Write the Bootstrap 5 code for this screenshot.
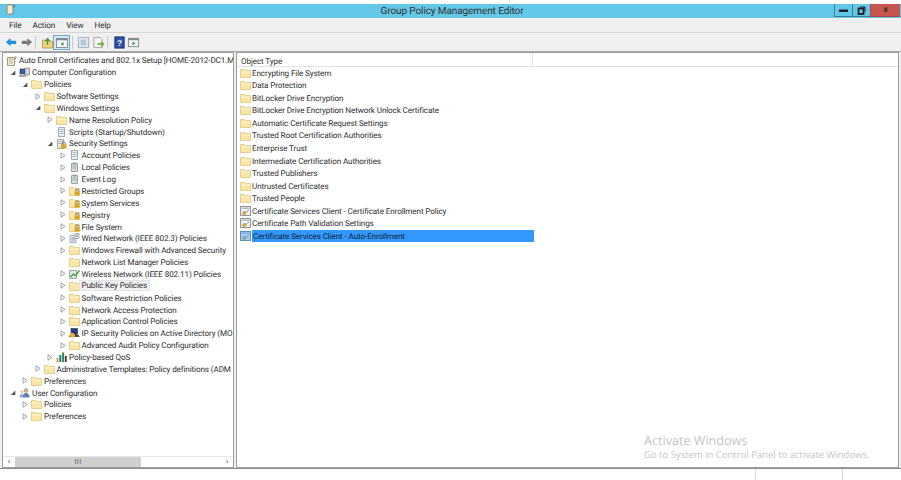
<!DOCTYPE html>
<html lang="en">
<head>
<meta charset="utf-8">
<title>Group Policy Management Editor</title>
<link href="https://cdn.jsdelivr.net/npm/bootstrap@5.3.0/dist/css/bootstrap.min.css" rel="stylesheet">
<style>
html,body{height:480px;overflow:hidden}
body{background:#fff;font-family:Roboto,"Noto Sans",sans-serif;font-size:8.1px;letter-spacing:-.11px;color:#2e2e2e;line-height:1;text-rendering:geometricPrecision}
.win{width:901px;height:480px;position:relative}
.topgap{height:4px}
.titlebar{height:14px;background:#63c7e8;font-size:10px;letter-spacing:-.1px;color:#333;position:relative}
.title-ico{width:9px;height:11px;margin-left:6px}
.title-text{left:0;right:0;top:0;bottom:0;padding-left:3px;padding-top:1px}
.capbtn{height:13px;width:18px;border:solid #3d7f99;border-width:0 0 1px 1px;position:relative;z-index:1}
.capbtn.closer{width:30px;background:#c7574e;border-color:#a8483f;margin-right:1px;font-weight:700;font-size:9px}
.menubar{height:15px;background:#f0f0f0;border-bottom:1px solid #d6d6d6;padding-left:9px;padding-top:3px;gap:11px;font-size:8.2px}
.toolbar{height:19px;background:#f0f0f0;border-bottom:1px solid #a9a9a9;padding-left:5px}
.tb{width:13px;height:13px;margin-right:2px;margin-top:3px}
.tb-up{width:11px;height:13px;margin-top:3px}
.tb-on{width:17px;height:15px;background:#d5e9f5;border:1px solid #6fa9cf;margin-top:2px}
.tb-sep{width:1px;height:13px;background:#c8c8c8;margin:3px 6px 0 0}
.tb-sep2{margin:3px 4px 0 2px}
.tb-sep3{margin:3px 5px 0 0}
.tb-help{margin-right:1px}
.panes{height:416px;background:#f0f0f0;padding:0 2px;gap:2px}
.pane-l{width:232px;background:#fff;border:1px solid #9c9c9c}
.pane-r{flex:1;background:#fff;border:1px solid #9c9c9c}
.tree{flex:1;overflow:hidden;padding-top:1.600px}
.trow{height:11.87px;white-space:nowrap;overflow:hidden}
.twist{width:6px;height:7px;flex:none;margin-right:3px}
.tico{width:11px;height:10px;flex:none;margin-right:2px}
.lv0{padding-left:3px}.lv1{padding-left:7px}.lv2{padding-left:19px}.lv3{padding-left:31.500px}.lv4{padding-left:44px}.lv5{padding-left:56.500px}
.hot{background:#f1f1f1;box-shadow:inset 0 0 0 1px #e4e4e4;padding:0 3px;margin-left:-3px;line-height:11px}
.hbar{height:11px;background:#fff;border-top:1px solid #e6e6e6}
.sbtn{width:12px;color:#555;font-size:9px}
.sthumb{width:126px;background:#d0d0d0;color:#555;font-size:7px;letter-spacing:.5px}
.shead{height:14px;border-bottom:1px solid #e3e3e3;padding-left:4px}
.shead-c{width:292px;border-right:1px solid #e3e3e3;height:100%;padding-top:3px}
.list{margin-top:-.4px}
.lrow{height:12.54px;white-space:nowrap;padding-left:3px}
.lrow .tico{margin-right:1px}
.sel{background:#3399ff;color:#123;width:282px;height:100%;padding-left:1px}
.lrow-sel .tico{background:#3399ff}
.lrow-sel .tico use{opacity:.6}
.statusbar{height:12px;background:#fff;border-top:1px solid #8f8f8f}
.st-a{width:756px;border-right:1px solid #d9d9d9}
.st-b{width:87px;border-right:1px solid #d9d9d9}
.wm{position:absolute;left:644px;top:433px;color:#c4c4c4;white-space:nowrap;font-family:"Open Sans",sans-serif;letter-spacing:0}
.wm1{font-size:12.600px;line-height:15px}
.wm2{font-size:9.500px;line-height:14px}
</style>
</head>
<body>
<svg width="0" height="0" class="position-absolute">
<symbol id="folder" viewBox="0 0 11 10"><path d="M.5 1.500h4l1 1h5v7H.5z" fill="#fae6a6" stroke="#e0c47c" stroke-width=".8"/><path d="M1 3.500h9.200v1H1z" fill="#fdf5d2"/></symbol>
<symbol id="lockf" viewBox="0 0 11 10"><path d="M.5 1.500h4l1 1h5v7H.5z" fill="#fae6a6" stroke="#e0c47c" stroke-width=".8"/><rect x="5.500" y="5.500" width="5" height="4" fill="#d9a520"/><path d="M6.700 5.500V4.200a1.300 1.300 0 0 1 2.600 0v1.300" fill="none" stroke="#77746a"/></symbol>
<symbol id="doc" viewBox="0 0 11 10"><path d="M2.500.5h6v9h-6z" fill="#e9eef2" stroke="#8c979f" stroke-width=".8"/><path d="M3.500 2.500h4M3.500 4.500h4M3.500 6.500h4" stroke="#8fa4b3" stroke-width=".7"/></symbol>
<symbol id="secdoc" viewBox="0 0 11 10"><path d="M1.500.5h6v9h-6z" fill="#e5e8ea" stroke="#8c979f" stroke-width=".8"/><path d="M2.500 2.500h4M2.500 4.500h4" stroke="#8fa4b3" stroke-width=".7"/><rect x="5" y="5.300" width="5.400" height="4.200" fill="#d9a520"/><path d="M6.300 5.300V4.200a1.400 1.400 0 0 1 2.800 0v1.100" fill="none" stroke="#77746a"/></symbol>
<symbol id="log" viewBox="0 0 11 10"><path d="M2.500 1.500h6v8h-6z" fill="#d8dfd9" stroke="#86918a" stroke-width=".8"/><path d="M4 .5h3v2H4z" fill="#9aa5a0"/><path d="M3.500 4h4M3.500 6h4" stroke="#7f9a90" stroke-width=".7"/></symbol>
<symbol id="computer" viewBox="0 0 11 10"><rect x="1" y="2" width="5" height="5" fill="#2f5fb5" stroke="#333" stroke-width=".6"/><rect x="6" y="1" width="4.500" height="7" fill="#cfd6dc" stroke="#666" stroke-width=".6"/><path d="M0 8.500h7v1H0z" fill="#555"/></symbol>
<symbol id="user" viewBox="0 0 11 10"><circle cx="7" cy="2.500" r="2" fill="#d9b08c" stroke="#777" stroke-width=".4"/><path d="M3.500 9.500c0-3 1.500-4.500 3.500-4.500s3.500 1.500 3.500 4.500z" fill="#5a7fae"/><path d="M.5 9.500c0-2 1-3.500 2.500-3.500l1 1-1 2.500z" fill="#8aa9c9"/><circle cx="3" cy="4" r="1.400" fill="#d9c7a8"/></symbol>
<symbol id="wired" viewBox="0 0 11 10"><path d="M1 2.500h6v7H1z" fill="#dfe6ea" stroke="#8d98a0" stroke-width=".7"/><path d="M6 .5h4v5H6z" fill="#f5f7f8" stroke="#7e8b93" stroke-width=".7"/><path d="M7 2h2M7 3.500h2M2.500 5h3M2.500 7h3" stroke="#5f7d95" stroke-width=".7"/></symbol>
<symbol id="wifi" viewBox="0 0 11 10"><path d="M.5 1.500h7v8h-7z" fill="#e1e6e3" stroke="#7e8b85" stroke-width=".7"/><path d="M1.500 8l3-3 2 1.500L10.500 1.500" fill="none" stroke="#3e9a3a" stroke-width="1.300"/></symbol>
<symbol id="ipsec" viewBox="0 0 11 10"><rect x="2" y=".5" width="6.500" height="5.500" fill="#24379a" stroke="#333" stroke-width=".6"/><path d="M1 6.500h8.500l1 2.500H0z" fill="#55504a"/><circle cx="3.500" cy="7" r="2.500" fill="#e0b72e"/><path d="M3 3.500l5 4" stroke="#1b1b1b" stroke-width="1"/></symbol>
<symbol id="qos" viewBox="0 0 11 10"><path d="M.5 6h2v4h-2z" fill="#e2a11d"/><path d="M3.300 3h2v7h-2z" fill="#1f6fc4"/><path d="M6.100 .5h2v9.500h-2z" fill="#2e8f3a"/><path d="M8.900 4h1.800v6H8.900z" fill="#3a3a3a"/></symbol>
<symbol id="policy" viewBox="0 0 11 10"><path d="M.5.500h10v9H.5z" fill="#f2f2f2" stroke="#777" stroke-width=".8"/><path d="M1.500 2.200h8" stroke="#8fa6bc"/><path d="M2 8l2.500-3 1.500 1.500L9 3.800" fill="none" stroke="#5a8fb5" stroke-width=".9"/><circle cx="4.500" cy="7.300" r="1.700" fill="#e0a526"/></symbol>
<symbol id="root" viewBox="0 0 11 10"><path d="M1.500 1.500h7v8h-7z" fill="#f2ecd2" stroke="#8b8568" stroke-width=".8"/><path d="M3 3h4M3 5h4M3 7h4" stroke="#a79f78" stroke-width=".7"/><path d="M9 .5l1.200 1-1.500 2" fill="none" stroke="#555" stroke-width=".7"/></symbol>
<symbol id="open" viewBox="0 0 6 7"><path d="M1 .8L5 3.500 1 6.200z" fill="#fff" stroke="#8a8a8a" stroke-width=".8"/></symbol>
<symbol id="shut" viewBox="0 0 6 7"><path d="M5.300 1.500V6H.8z" fill="#555"/></symbol>
</svg>

<div class="win d-flex flex-column">
  <div class="topgap"></div>
  <div class="titlebar d-flex align-items-start">
    <svg class="title-ico" viewBox="0 0 9 11"><path d="M1 1h6v9H1z" fill="#f2ecd2" stroke="#8b8568"/><path d="M7.500 .5l1 1-1 2" fill="none" stroke="#555"/></svg>
    <div class="title-text position-absolute d-flex align-items-center justify-content-center">Group Policy Management Editor</div>
    <div class="ms-auto d-flex">
      <div class="capbtn d-flex align-items-center justify-content-center"><svg width="9" height="3"><rect width="9" height="2.500" y=".5" fill="#222"/></svg></div>
      <div class="capbtn d-flex align-items-center justify-content-center"><svg width="9" height="9" viewBox="0 0 9 9"><path d="M3 1h5v5" fill="none" stroke="#222"/><rect x="1.500" y="2.500" width="5" height="5.500" fill="none" stroke="#222" stroke-width="1.800"/></svg></div>
      <div class="capbtn closer d-flex align-items-center justify-content-center">x</div>
    </div>
  </div>
  <nav class="menubar d-flex align-items-center"><span>File</span><span>Action</span><span>View</span><span>Help</span></nav>
  <div class="toolbar d-flex align-items-start">
    <svg class="tb" viewBox="0 0 14 14"><path d="M1 6.500l5-4V5h6v3.500H6V11z" fill="#1e8fdc"/></svg>
    <svg class="tb" viewBox="0 0 14 14"><path d="M13 6.500l-5-4V5H2v3.500h6V11z" fill="#7b7b7b"/></svg>
    <div class="tb-sep"></div>
    <svg class="tb-up" viewBox="0 0 12 13"><path d="M.5 4h4l1 1h6v7.500H.5z" fill="#efd27a" stroke="#c49a3c"/><path d="M6 9V2.500L3.500 5M6 2.500L8.500 5" fill="none" stroke="#3b9a35" stroke-width="1.500"/></svg>
    <div class="tb-on d-flex align-items-center justify-content-center"><svg width="12" height="10" viewBox="0 0 13 11"><rect x=".5" y=".5" width="12" height="10" fill="#f3f5f6" stroke="#7f8a92"/><rect x=".5" y=".5" width="12" height="2" fill="#7f8a92"/><path d="M8 4.500v4L5 6.500z" fill="#2f8f3a"/></svg></div>
    <div class="tb-sep tb-sep2"></div>
    <svg class="tb" viewBox="0 0 14 14"><rect x="1.500" y="1.500" width="11" height="11" fill="#dfe7ec" stroke="#9fb0bb"/><rect x="4" y="4" width="6" height="6" fill="#b6c6d2"/></svg>
    <svg class="tb" viewBox="0 0 14 14"><path d="M2 1.500h7l2 2V12.500H2z" fill="#f4f4f0" stroke="#a0a0a0"/><path d="M6 7.500h4V5l3.500 3.500L10 12V9.500H6z" fill="#6db33f"/></svg>
    <div class="tb-sep tb-sep3"></div>
    <svg class="tb tb-help" viewBox="0 0 14 14"><rect x="2" y="1" width="10" height="12" fill="#2f4fa8" stroke="#1d2f73"/><text x="7" y="10.500" font-size="9" font-weight="700" fill="#fff" text-anchor="middle" font-family="Liberation Sans">?</text></svg>
    <svg class="tb" viewBox="0 0 14 14"><rect x="1.500" y="2.500" width="11" height="9" fill="#f3f5f6" stroke="#7f8a92"/><rect x="1.500" y="2.500" width="11" height="2" fill="#7f8a92"/><path d="M6 6v4l3-2z" fill="#2f8f3a"/></svg>
  </div>
  <div class="panes d-flex">
    <div class="pane-l d-flex flex-column">
      <div class="tree">
        <div class="trow d-flex align-items-center lv0"><svg class="tico"><use href="#root"/></svg><span>Auto Enroll Certificates and 802.1x Setup [HOME-2012-DC1.M</span></div>
        <div class="trow d-flex align-items-center lv1"><svg class="twist"><use href="#shut"/></svg><svg class="tico"><use href="#computer"/></svg><span>Computer Configuration</span></div>
        <div class="trow d-flex align-items-center lv2"><svg class="twist"><use href="#shut"/></svg><svg class="tico"><use href="#folder"/></svg><span>Policies</span></div>
        <div class="trow d-flex align-items-center lv3"><svg class="twist"><use href="#open"/></svg><svg class="tico"><use href="#folder"/></svg><span>Software Settings</span></div>
        <div class="trow d-flex align-items-center lv3"><svg class="twist"><use href="#shut"/></svg><svg class="tico"><use href="#folder"/></svg><span>Windows Settings</span></div>
        <div class="trow d-flex align-items-center lv4"><svg class="twist"><use href="#open"/></svg><svg class="tico"><use href="#folder"/></svg><span>Name Resolution Policy</span></div>
        <div class="trow d-flex align-items-center lv4"><svg class="twist"></svg><svg class="tico"><use href="#doc"/></svg><span>Scripts (Startup/Shutdown)</span></div>
        <div class="trow d-flex align-items-center lv4"><svg class="twist"><use href="#shut"/></svg><svg class="tico"><use href="#secdoc"/></svg><span>Security Settings</span></div>
        <div class="trow d-flex align-items-center lv5"><svg class="twist"><use href="#open"/></svg><svg class="tico"><use href="#doc"/></svg><span>Account Policies</span></div>
        <div class="trow d-flex align-items-center lv5"><svg class="twist"><use href="#open"/></svg><svg class="tico"><use href="#log"/></svg><span>Local Policies</span></div>
        <div class="trow d-flex align-items-center lv5"><svg class="twist"><use href="#open"/></svg><svg class="tico"><use href="#log"/></svg><span>Event Log</span></div>
        <div class="trow d-flex align-items-center lv5"><svg class="twist"><use href="#open"/></svg><svg class="tico"><use href="#lockf"/></svg><span>Restricted Groups</span></div>
        <div class="trow d-flex align-items-center lv5"><svg class="twist"><use href="#open"/></svg><svg class="tico"><use href="#lockf"/></svg><span>System Services</span></div>
        <div class="trow d-flex align-items-center lv5"><svg class="twist"><use href="#open"/></svg><svg class="tico"><use href="#lockf"/></svg><span>Registry</span></div>
        <div class="trow d-flex align-items-center lv5"><svg class="twist"><use href="#open"/></svg><svg class="tico"><use href="#lockf"/></svg><span>File System</span></div>
        <div class="trow d-flex align-items-center lv5"><svg class="twist"><use href="#open"/></svg><svg class="tico"><use href="#wired"/></svg><span>Wired Network (IEEE 802.3) Policies</span></div>
        <div class="trow d-flex align-items-center lv5"><svg class="twist"><use href="#open"/></svg><svg class="tico"><use href="#folder"/></svg><span>Windows Firewall with Advanced Security</span></div>
        <div class="trow d-flex align-items-center lv5"><svg class="twist"></svg><svg class="tico"><use href="#folder"/></svg><span>Network List Manager Policies</span></div>
        <div class="trow d-flex align-items-center lv5"><svg class="twist"><use href="#open"/></svg><svg class="tico"><use href="#wifi"/></svg><span>Wireless Network (IEEE 802.11) Policies</span></div>
        <div class="trow d-flex align-items-center lv5"><svg class="twist"><use href="#open"/></svg><svg class="tico"><use href="#folder"/></svg><span class="hot">Public Key Policies</span></div>
        <div class="trow d-flex align-items-center lv5"><svg class="twist"><use href="#open"/></svg><svg class="tico"><use href="#folder"/></svg><span>Software Restriction Policies</span></div>
        <div class="trow d-flex align-items-center lv5"><svg class="twist"><use href="#open"/></svg><svg class="tico"><use href="#folder"/></svg><span>Network Access Protection</span></div>
        <div class="trow d-flex align-items-center lv5"><svg class="twist"><use href="#open"/></svg><svg class="tico"><use href="#folder"/></svg><span>Application Control Policies</span></div>
        <div class="trow d-flex align-items-center lv5"><svg class="twist"><use href="#open"/></svg><svg class="tico"><use href="#ipsec"/></svg><span>IP Security Policies on Active Directory (MO</span></div>
        <div class="trow d-flex align-items-center lv5"><svg class="twist"><use href="#open"/></svg><svg class="tico"><use href="#folder"/></svg><span>Advanced Audit Policy Configuration</span></div>
        <div class="trow d-flex align-items-center lv4"><svg class="twist"><use href="#open"/></svg><svg class="tico"><use href="#qos"/></svg><span>Policy-based QoS</span></div>
        <div class="trow d-flex align-items-center lv3"><svg class="twist"><use href="#open"/></svg><svg class="tico"><use href="#folder"/></svg><span>Administrative Templates: Policy definitions (ADM</span></div>
        <div class="trow d-flex align-items-center lv2"><svg class="twist"><use href="#open"/></svg><svg class="tico"><use href="#folder"/></svg><span>Preferences</span></div>
        <div class="trow d-flex align-items-center lv1"><svg class="twist"><use href="#shut"/></svg><svg class="tico"><use href="#user"/></svg><span>User Configuration</span></div>
        <div class="trow d-flex align-items-center lv2"><svg class="twist"><use href="#open"/></svg><svg class="tico"><use href="#folder"/></svg><span>Policies</span></div>
        <div class="trow d-flex align-items-center lv2"><svg class="twist"><use href="#open"/></svg><svg class="tico"><use href="#folder"/></svg><span>Preferences</span></div>
      </div>
      <div class="hbar d-flex">
        <div class="sbtn d-flex align-items-center justify-content-center">&lsaquo;</div>
        <div class="sthumb d-flex align-items-center justify-content-center">III</div>
        <div class="flex-grow-1"></div>
        <div class="sbtn d-flex align-items-center justify-content-center">&rsaquo;</div>
      </div>
    </div>
    <div class="pane-r d-flex flex-column">
      <div class="shead d-flex align-items-center"><div class="shead-c d-flex align-items-center">Object Type</div></div>
      <div class="list">
        <div class="lrow d-flex align-items-center"><svg class="tico"><use href="#folder"/></svg><span>Encrypting File System</span></div>
        <div class="lrow d-flex align-items-center"><svg class="tico"><use href="#folder"/></svg><span>Data Protection</span></div>
        <div class="lrow d-flex align-items-center"><svg class="tico"><use href="#folder"/></svg><span>BitLocker Drive Encryption</span></div>
        <div class="lrow d-flex align-items-center"><svg class="tico"><use href="#folder"/></svg><span>BitLocker Drive Encryption Network Unlock Certificate</span></div>
        <div class="lrow d-flex align-items-center"><svg class="tico"><use href="#folder"/></svg><span>Automatic Certificate Request Settings</span></div>
        <div class="lrow d-flex align-items-center"><svg class="tico"><use href="#folder"/></svg><span>Trusted Root Certification Authorities</span></div>
        <div class="lrow d-flex align-items-center"><svg class="tico"><use href="#folder"/></svg><span>Enterprise Trust</span></div>
        <div class="lrow d-flex align-items-center"><svg class="tico"><use href="#folder"/></svg><span>Intermediate Certification Authorities</span></div>
        <div class="lrow d-flex align-items-center"><svg class="tico"><use href="#folder"/></svg><span>Trusted Publishers</span></div>
        <div class="lrow d-flex align-items-center"><svg class="tico"><use href="#folder"/></svg><span>Untrusted Certificates</span></div>
        <div class="lrow d-flex align-items-center"><svg class="tico"><use href="#folder"/></svg><span>Trusted People</span></div>
        <div class="lrow d-flex align-items-center"><svg class="tico"><use href="#policy"/></svg><span>Certificate Services Client - Certificate Enrollment Policy</span></div>
        <div class="lrow d-flex align-items-center"><svg class="tico"><use href="#policy"/></svg><span>Certificate Path Validation Settings</span></div>
        <div class="lrow lrow-sel d-flex align-items-center"><svg class="tico"><use href="#policy"/></svg><div class="sel d-flex align-items-center">Certificate Services Client - Auto-Enrollment</div></div>
      </div>
    </div>
  </div>
  <div class="statusbar d-flex"><div class="st-a"></div><div class="st-b"></div></div>
  <div class="wm"><div class="wm1">Activate Windows</div><div class="wm2">Go to System in Control Panel to activate Windows.</div></div>
</div>
<script src="https://cdn.jsdelivr.net/npm/bootstrap@5.3.0/dist/js/bootstrap.bundle.min.js"></script>
</body>
</html>
